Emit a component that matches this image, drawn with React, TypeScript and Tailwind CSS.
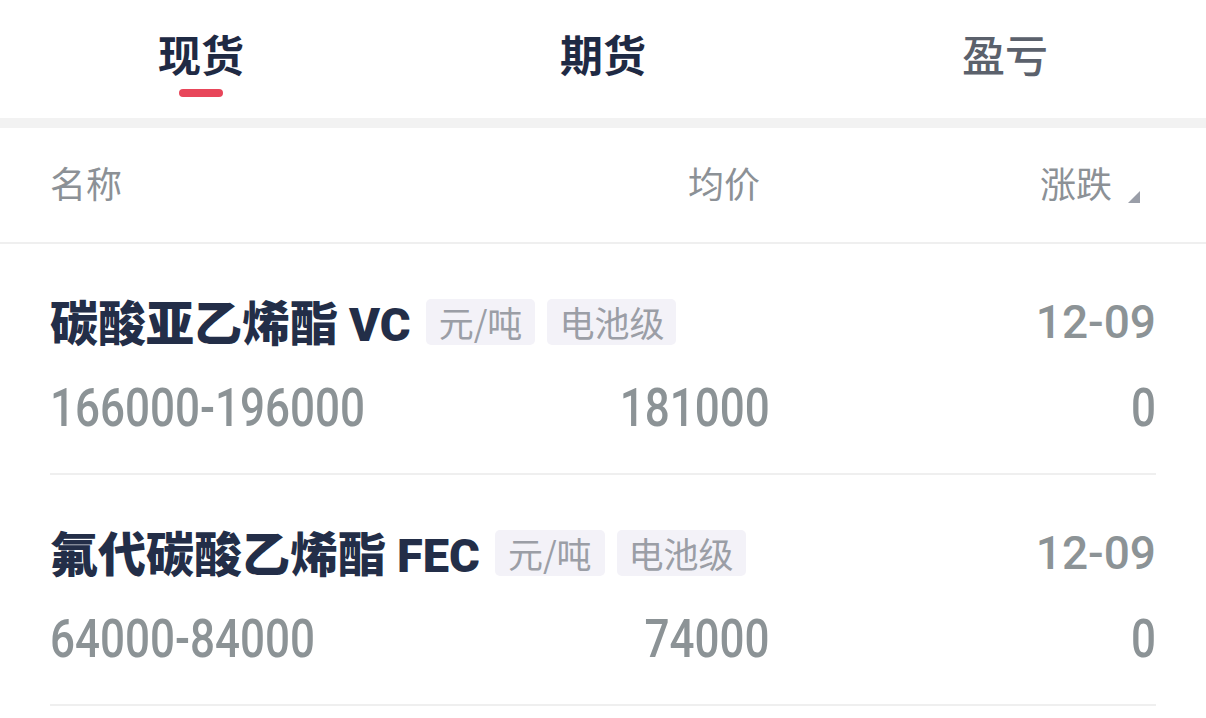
import React from 'react';

const cjk = "font-['Noto_Sans_CJK_SC',sans-serif]";

const tabs = [
  { label: '现货', cls: 'text-[#1f2a44] font-bold', active: true },
  { label: '期货', cls: 'text-[#1f2a44] font-bold', active: false },
  { label: '盈亏', cls: 'text-[#5b616c] font-medium', active: false },
];

const rows = [
  { name: '碳酸亚乙烯酯', code: 'VC', unit: '元/吨', grade: '电池级', date: '12-09', range: '166000-196000', avg: '181000', change: '0' },
  { name: '氟代碳酸乙烯酯', code: 'FEC', unit: '元/吨', grade: '电池级', date: '12-09', range: '64000-84000', avg: '74000', change: '0' },
];

export default function App() {
  return (
    <div className={`w-[1206px] h-[718px] overflow-hidden bg-white ${cjk}`}>
      {/* Tabs */}
      <div className="flex h-[118px]">
        {tabs.map((t) => (
          <div key={t.label} className="flex-1 flex flex-col items-center pt-[26px]">
            <span className={`text-[43px] leading-[54px] ${t.cls}`}>{t.label}</span>
            {t.active ? (
              <span className="mt-[9px] w-[44px] h-[8px] rounded-full bg-[#e8465a]" />
            ) : null}
          </div>
        ))}
      </div>
      <div className="h-[10px] bg-[#f2f2f2]" />

      {/* Header */}
      <div className="h-[116px] flex items-center pb-[6px] px-[50px] border-b-2 border-[#efefef] text-[36px] text-[#8c9196]">
        <span className="w-[400px]">名称</span>
        <span className="w-[310px] text-right">均价</span>
        <div className="flex-1 flex items-end justify-end pr-[16px]">
          <span>涨跌</span>
          <svg className="ml-[16px] mb-[6px]" width="12" height="12" viewBox="0 0 12 12">
            <path d="M12 0 L12 12 L0 12 Z" fill="#9a9ea8" />
          </svg>
        </div>
      </div>

      {/* Rows */}
      {rows.map((r) => (
        <div key={r.name} className="mx-[50px] pt-[54px] pb-[37px] border-b-2 border-[#efefef]">
          <div className="flex items-center h-[48px]">
            <span className="text-[48px] font-black text-[#232e48] leading-none">
              {r.name} <span className="font-['Roboto',sans-serif] font-black text-[47px]">{r.code}</span>
            </span>
            <span className="ml-[15px] h-[46px] px-[13px] rounded-[5px] bg-[#f3f2f8] text-[#9b9ea6] text-[35px] leading-[46px]">{r.unit}</span>
            <span className="ml-[12px] h-[46px] px-[12px] rounded-[5px] bg-[#f3f2f8] text-[#9b9ea6] text-[35px] leading-[46px]">{r.grade}</span>
            <span className="ml-auto font-['Roboto',sans-serif] text-[46px] font-medium text-[#8c9396] leading-none">{r.date}</span>
          </div>
          <div className="flex items-center h-[56px] mt-[34px] font-['Roboto',sans-serif] font-medium text-[53px] text-[#8c9396] leading-none">
            <div className="w-[400px]">
              <span className="inline-block origin-left scale-x-[0.83]">{r.range}</span>
            </div>
            <div className="w-[320px] text-right">
              <span className="inline-block origin-right scale-x-[0.83]">{r.avg}</span>
            </div>
            <div className="flex-1 text-right">
              <span className="inline-block origin-right scale-x-[0.83]">{r.change}</span>
            </div>
          </div>
        </div>
      ))}
    </div>
  );
}
